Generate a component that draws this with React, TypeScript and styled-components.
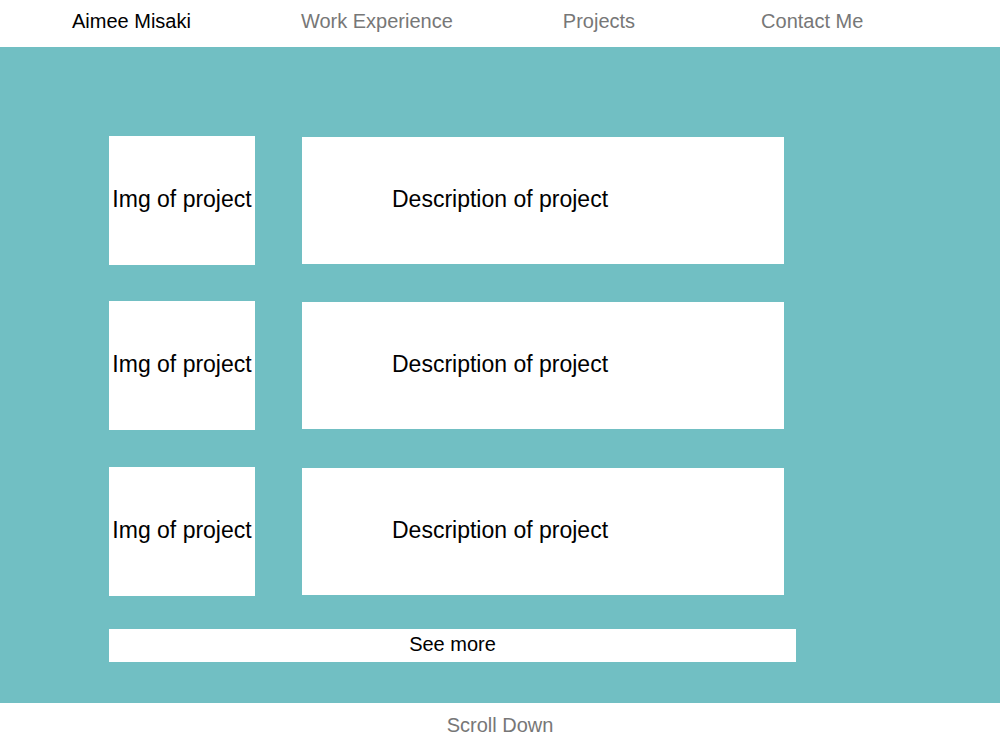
import React from 'react';
import styled, { createGlobalStyle } from 'styled-components';

const GlobalStyle = createGlobalStyle`
  * { box-sizing: border-box; }
  body {
    margin: 0;
    font-family: 'Liberation Sans', Arial, sans-serif;
    background: #ffffff;
  }
`;

const navItems = [
  { label: 'Aimee Misaki', active: true, gap: 0 },
  { label: 'Work Experience', active: false, gap: 110 },
  { label: 'Projects', active: false, gap: 110 },
  { label: 'Contact Me', active: false, gap: 126 },
];

const projects = [1, 2, 3];

const App: React.FC = () => {
  return (
    <>
      <GlobalStyle />
      <Nav>
        {navItems.map((item) => (
          <NavLink key={item.label} $active={item.active} $gap={item.gap}>
            {item.label}
          </NavLink>
        ))}
      </Nav>

      <ProjectSection>
        <ProjectList>
          {projects.map((id) => (
            <ProjectRow key={id}>
              <ProjectImage>Img of project</ProjectImage>
              <ProjectDescription>Description of project</ProjectDescription>
            </ProjectRow>
          ))}
        </ProjectList>
        <SeeMore>See more</SeeMore>
      </ProjectSection>

      <Footer>Scroll Down</Footer>
    </>
  );
};

export default App;

const Nav = styled.nav`
  display: flex;
  align-items: center;
  height: 47px;
  padding: 0 0 5px 72px;
  background-color: #ffffff;
`;

const NavLink = styled.a<{ $active: boolean; $gap: number }>`
  margin-left: ${(props) => props.$gap}px;
  font-size: 20px;
  color: ${(props) => (props.$active ? '#000000' : '#777777')};
  text-decoration: none;
  cursor: pointer;
`;

const ProjectSection = styled.section`
  display: flex;
  flex-direction: column;
  height: 656px;
  padding: 89px 0 0 109px;
  background-color: #71bfc3;
`;

const ProjectList = styled.div`
  display: flex;
  flex-direction: column;
  gap: 36.3px;
`;

const ProjectRow = styled.div`
  display: flex;
  align-items: center;
  gap: 47px;
`;

const ProjectImage = styled.div`
  display: flex;
  align-items: center;
  justify-content: center;
  width: 146px;
  height: 129px;
  padding-bottom: 2px;
  background-color: #ffffff;
  font-size: 23px;
  color: #000000;
  white-space: nowrap;
`;

const ProjectDescription = styled.div`
  display: flex;
  align-items: center;
  width: 482px;
  height: 127px;
  padding: 0 0 2px 90px;
  background-color: #ffffff;
  font-size: 23px;
  color: #000000;
`;

const SeeMore = styled.button`
  width: 687px;
  height: 33px;
  margin-top: 33px;
  padding: 0 0 2px;
  border: none;
  background-color: #ffffff;
  font-family: 'Liberation Sans', Arial, sans-serif;
  font-size: 20px;
  color: #000000;
  cursor: pointer;
`;

const Footer = styled.footer`
  display: flex;
  justify-content: center;
  align-items: center;
  height: 47px;
  padding-bottom: 2px;
  font-size: 20px;
  color: #777777;
`;
